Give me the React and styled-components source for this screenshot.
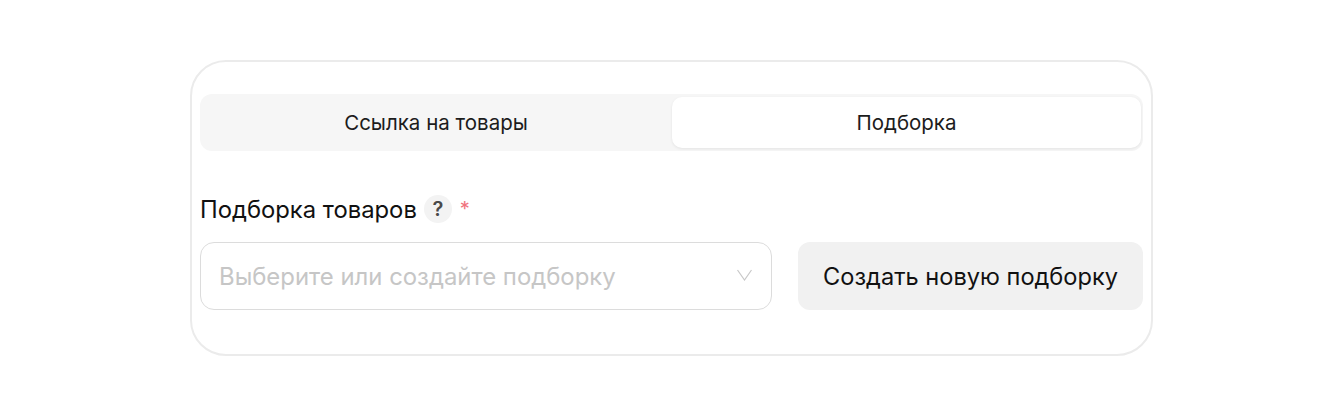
import React from 'react';
import styled, { createGlobalStyle } from 'styled-components';

const GlobalStyle = createGlobalStyle`
  html, body {
    margin: 0;
    padding: 0;
    background: #fff;
  }
  body {
    font-family: Inter, "Noto Sans", "Liberation Sans", sans-serif;
    color: #1a1a1a;
  }
`;

const Page = styled.div`
  width: 1344px;
  height: 416px;
  box-sizing: border-box;
  padding: 60px 191px 0 190px;
`;

const Card = styled.div`
  box-sizing: border-box;
  height: 296px;
  padding: 32px 8px 0;
  border: 2px solid #ebebeb;
  border-radius: 36px;
  background: #fff;
`;

const Tabs = styled.div`
  display: flex;
  box-sizing: border-box;
  height: 57px;
  padding: 3px 2px 3px 0;
  border-radius: 12px;
  background: #f6f6f6;
`;

const Tab = styled.div`
  flex: ${(p) => (p.$active ? '0 0 469px' : '1')};
  display: flex;
  align-items: center;
  justify-content: center;
  border-radius: 10px;
  font-size: 20.5px;
  color: #1c1c1c;
  background: ${(p) => (p.$active ? '#fff' : 'transparent')};
  box-shadow: ${(p) => (p.$active ? '0 1px 3px rgba(0, 0, 0, 0.08)' : 'none')};
`;

const Label = styled.div`
  display: flex;
  align-items: center;
  height: 30px;
  margin-top: 43px;
  font-size: 23.8px;
  color: #111;
`;

const Hint = styled.span`
  display: flex;
  align-items: center;
  justify-content: center;
  width: 28px;
  height: 28px;
  margin-left: 7px;
  border-radius: 50%;
  background: #f3f3f3;
  font-size: 20px;
  font-weight: 600;
  color: #4a4a4a;
`;

const Required = styled.span`
  margin: 0 0 0 8px;
  font-size: 20px;
  color: #f0737e;
`;

const Row = styled.div`
  display: flex;
  gap: 26px;
  margin-top: 18px;
`;

const Select = styled.div`
  display: flex;
  align-items: center;
  justify-content: space-between;
  box-sizing: border-box;
  width: 572px;
  height: 68px;
  padding: 0 18px;
  border: 1.5px solid #dcdcdc;
  border-radius: 14px;
  font-size: 23.9px;
  color: #c6c6c6;
`;

const Chevron = styled.svg`
  width: 17px;
  height: 12px;
  margin-top: -3px;
  fill: none;
  stroke: #c8c8c8;
  stroke-width: 1.2;
`;

const Button = styled.button`
  flex: 1;
  height: 68px;
  padding: 0;
  border: none;
  border-radius: 12px;
  background: #f1f1f1;
  font-family: inherit;
  font-size: 23.6px;
  color: #111;
`;

export default function App() {
  return (
    <>
      <GlobalStyle />
      <Page>
        <Card>
          <Tabs>
            <Tab>Ссылка на товары</Tab>
            <Tab $active>Подборка</Tab>
          </Tabs>
          <Label>
            Подборка товаров
            <Hint>?</Hint>
            <Required>*</Required>
          </Label>
          <Row>
            <Select>
              Выберите или создайте подборку
              <Chevron viewBox="0 0 17 12">
                <path d="M1.5 1 8.5 11l7-10" />
              </Chevron>
            </Select>
            <Button>Создать новую подборку</Button>
          </Row>
        </Card>
      </Page>
    </>
  );
}
